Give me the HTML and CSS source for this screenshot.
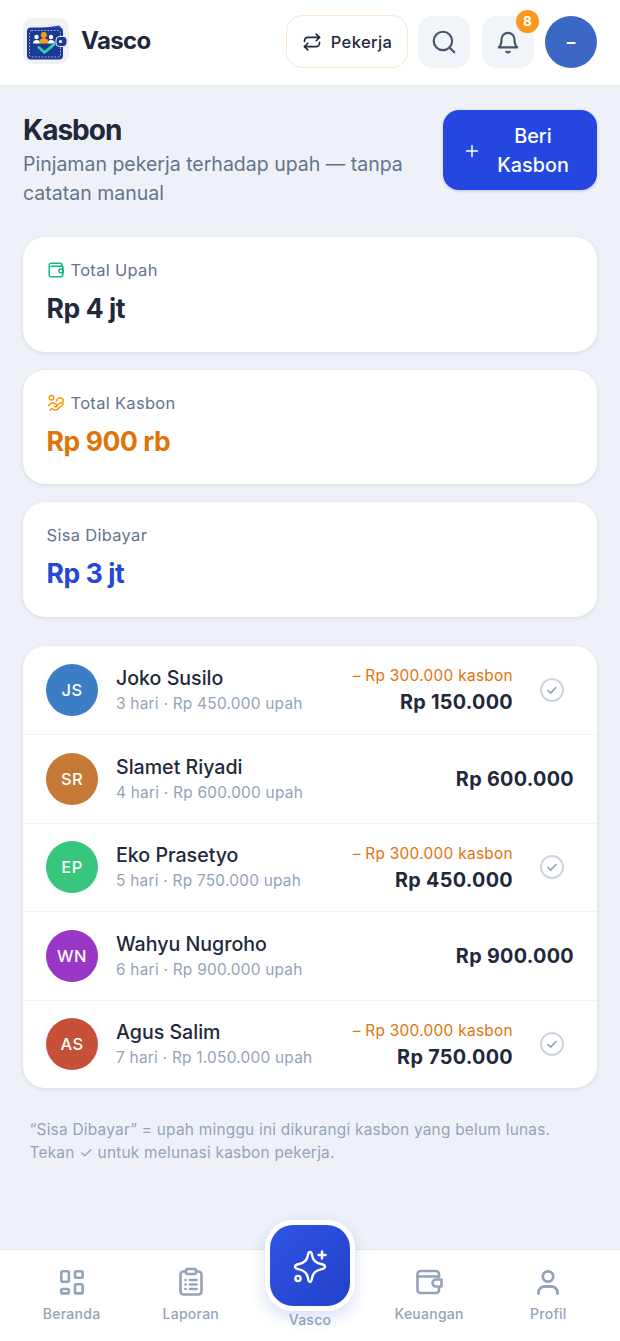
FILE: index.html
```html
<!DOCTYPE html>
<html lang="id">
<head>
<meta charset="utf-8">
<title>Kasbon</title>
<link rel="stylesheet" href="styles.css">
</head>
<body>
<div class="app">
  <header class="topbar">
    <div class="brand">
      <div class="logo">
        <svg viewBox="0 0 46 46" width="46" height="46">
          <path d="M6 12 L36 7.500 Q37.500 7.500 37.500 9 L37.500 13 Z" fill="#2f55e0"/>
          <rect x="4" y="9.500" width="36" height="32" rx="4" fill="#1c3a94"/>
          <rect x="6.500" y="12.500" width="31" height="26.500" rx="2" fill="none" stroke="#c6d3f2" stroke-width=".8" stroke-dasharray="1.600 1.600"/>
          <rect x="33" y="18.500" width="11" height="10" rx="3.500" fill="#1c3a94" stroke="#e8eefb" stroke-width="1"/>
          <circle cx="37.500" cy="23.500" r="1.600" fill="#fff"/>
          <circle cx="13.500" cy="19" r="2.200" fill="#fff"/>
          <circle cx="28" cy="19" r="2.200" fill="#fff"/>
          <path d="M10 25.500 a3.700 3.500 0 0 1 7.400 0Z M24.500 25.500 a3.700 3.500 0 0 1 7.400 0Z" fill="#fff"/>
          <circle cx="20.800" cy="17" r="3" fill="#f59e1f"/>
          <path d="M15.800 25.500 a5 5.500 0 0 1 10 0Z" fill="#f59e1f"/>
          <path d="M16 29.500 L21.500 34.500 L31.500 26" fill="none" stroke="#2dd4aa" stroke-width="2.800" stroke-linecap="round" stroke-linejoin="round"/>
        </svg>
      </div>
      <span class="brand-name">Vasco</span>
    </div>
    <div class="actions">
      <button class="switch">
        <svg class="i20" viewBox="0 0 24 24" fill="none" stroke="#1e293b" stroke-width="2" stroke-linecap="round" stroke-linejoin="round"><path d="M17 2.500l4 4-4 4"/><path d="M3 11.500v-1a4 4 0 0 1 4-4h14"/><path d="M7 21.500l-4-4 4-4"/><path d="M21 12.500v1a4 4 0 0 1-4 4H3"/></svg>
        <span>Pekerja</span>
      </button>
      <div class="icon-btn">
        <svg class="i26" viewBox="0 0 24 24" fill="none" stroke="#475569" stroke-width="2" stroke-linecap="round"><circle cx="11" cy="11" r="8.500"/><path d="M21.500 21.500l-4.500-4.500"/></svg>
      </div>
      <div class="icon-btn bell">
        <svg class="i26" viewBox="0 0 24 24" fill="none" stroke="#475569" stroke-width="2" stroke-linecap="round" stroke-linejoin="round"><path d="M6 9.500a6 6 0 0 1 12 0c0 5.500 2.500 7.500 2.500 7.500h-17S6 15 6 9.500"/><path d="M10.500 21c1 .8 2 .8 3 0"/></svg>
        <span class="badge">8</span>
      </div>
      <div class="avatar-top">–</div>
    </div>
  </header>

  <main class="content">
    <section class="page-head">
      <div class="page-title">
        <h1>Kasbon</h1>
        <p>Pinjaman pekerja terhadap upah — tanpa catatan manual</p>
      </div>
      <button class="primary">
        <svg class="plus" viewBox="0 0 14 14" fill="none" stroke="#fff" stroke-width="1.500" stroke-linecap="round"><path d="M7 1.500v11M1.500 7h11"/></svg>
        <span class="primary-label">Beri Kasbon</span>
      </button>
    </section>

    <section class="stats">
      <div class="stat">
        <div class="stat-label">
          <svg class="i18" viewBox="0 0 24 24" fill="none" stroke="#10b981" stroke-width="2" stroke-linecap="round" stroke-linejoin="round"><path d="M20 7V5.500A2.500 2.500 0 0 0 17.500 3h-12A2.500 2.500 0 0 0 3 5.500v13A2.500 2.500 0 0 0 5.500 21h13a2.500 2.500 0 0 0 2.500-2.500V7H5.500"/><path d="M21.500 11H18a2 2 0 0 0 0 4.500h3.500z"/></svg>
          <span>Total Upah</span>
        </div>
        <div class="stat-value">Rp 4 jt</div>
      </div>
      <div class="stat">
        <div class="stat-label">
          <svg class="i18" viewBox="0 0 24 24" fill="none" stroke="#f59e0b" stroke-width="2" stroke-linecap="round" stroke-linejoin="round"><circle cx="6" cy="5" r="3"/><path d="M2 15.500l3.500-3c1.500-1 3-1 4.500 0l3 1.500a1.700 1.700 0 0 1-1.500 3l-2-.5"/><path d="M13 15l6-3.500c2-1 3.500 1.500 1.800 2.800L14 20.500c-1.500 1-3 1-4.500.5L6 19.500 4 21.500"/><path d="M12.500 9.500c.5-4 5-5.500 8-3.500 1.500 1 1.500 3 .5 5"/></svg>
          <span>Total Kasbon</span>
        </div>
        <div class="stat-value orange">Rp 900 rb</div>
      </div>
      <div class="stat">
        <div class="stat-label"><span>Sisa Dibayar</span></div>
        <div class="stat-value blue">Rp 3 jt</div>
      </div>
    </section>

    <section class="list">
      <div class="row">
        <div class="av av-blue">JS</div>
        <div class="who"><div class="name">Joko Susilo</div><div class="meta">3 hari · Rp 450.000 upah</div></div>
        <div class="amt"><div class="deduct">– Rp 300.000 kasbon</div><div class="net">Rp 150.000</div></div>
        <svg class="check" viewBox="0 0 26 26" fill="none"><circle cx="13" cy="13" r="11" stroke="#cbd5e1" stroke-width="2"/><path d="M9 13.500l2.700 2.700L17 10.500" stroke="#94a3b8" stroke-width="1.700" stroke-linecap="round" stroke-linejoin="round"/></svg>
      </div>
      <div class="row">
        <div class="av av-brown">SR</div>
        <div class="who"><div class="name">Slamet Riyadi</div><div class="meta">4 hari · Rp 600.000 upah</div></div>
        <div class="amt"><div class="net">Rp 600.000</div></div>
      </div>
      <div class="row">
        <div class="av av-green">EP</div>
        <div class="who"><div class="name">Eko Prasetyo</div><div class="meta">5 hari · Rp 750.000 upah</div></div>
        <div class="amt"><div class="deduct">– Rp 300.000 kasbon</div><div class="net">Rp 450.000</div></div>
        <svg class="check" viewBox="0 0 26 26" fill="none"><circle cx="13" cy="13" r="11" stroke="#cbd5e1" stroke-width="2"/><path d="M9 13.500l2.700 2.700L17 10.500" stroke="#94a3b8" stroke-width="1.700" stroke-linecap="round" stroke-linejoin="round"/></svg>
      </div>
      <div class="row">
        <div class="av av-purple">WN</div>
        <div class="who"><div class="name">Wahyu Nugroho</div><div class="meta">6 hari · Rp 900.000 upah</div></div>
        <div class="amt"><div class="net">Rp 900.000</div></div>
      </div>
      <div class="row">
        <div class="av av-red">AS</div>
        <div class="who"><div class="name">Agus Salim</div><div class="meta">7 hari · Rp 1.050.000 upah</div></div>
        <div class="amt"><div class="deduct">– Rp 300.000 kasbon</div><div class="net">Rp 750.000</div></div>
        <svg class="check" viewBox="0 0 26 26" fill="none"><circle cx="13" cy="13" r="11" stroke="#cbd5e1" stroke-width="2"/><path d="M9 13.500l2.700 2.700L17 10.500" stroke="#94a3b8" stroke-width="1.700" stroke-linecap="round" stroke-linejoin="round"/></svg>
      </div>
    </section>

    <p class="note">“Sisa Dibayar” = upah minggu ini dikurangi kasbon yang belum lunas. Tekan ✓ untuk melunasi kasbon pekerja.</p>
  </main>

  <nav class="tabbar">
    <div class="tab">
      <svg class="i30" viewBox="0 0 30 30" fill="none" stroke="#94a3b8" stroke-width="2.600" stroke-linejoin="round"><rect x="4.300" y="4.300" width="7.600" height="10.500" rx="1.500"/><rect x="4.300" y="22" width="7.600" height="4.400" rx="1.500"/><rect x="18" y="4.300" width="7.600" height="6.500" rx="1.500"/><rect x="18" y="17.300" width="7.600" height="9.100" rx="1.500"/></svg>
      <span>Beranda</span>
    </div>
    <div class="tab">
      <svg class="i30" viewBox="0 0 30 30" fill="none" stroke="#94a3b8" stroke-width="2.600" stroke-linecap="round" stroke-linejoin="round"><path d="M10 4.500H7.500A3 3 0 0 0 4.500 7.500v17a3 3 0 0 0 3 3h15a3 3 0 0 0 3-3v-17a3 3 0 0 0-3-3H20"/><rect x="10" y="2" width="10" height="5" rx="1.500"/><path d="M9.500 13h.1M14 13h6.500M9.500 17.500h.1M14 17.500h6.500M9.500 22h.1M14 22h6.500"/></svg>
      <span>Laporan</span>
    </div>
    <div class="tab tab-center">
      <div class="fab">
        <svg viewBox="0 0 40 40" width="40" height="40" fill="none" stroke="#fff" stroke-width="2.400" stroke-linecap="round" stroke-linejoin="round"><path d="M20 6C21.500 6 21.800 7.500 22 9C22.700 13.500 25.500 17 31 18C33 18.400 35 19 35 20.800C35 22.500 33 23 31 23.400C25.500 24.500 22.700 28 22 32C21.800 34 21.500 36 20 36C18.500 36 18.200 34 18 32C17.300 28 14.500 24.500 9 23.400C7 23 5 22.500 5 20.800C5 19 7 18.400 9 18C14.500 17 17.300 13.500 18 9C18.200 7.500 18.500 6 20 6Z"/><path d="M32 5.500v7M28.500 9h7"/><circle cx="8" cy="32.500" r="2.600"/></svg>
      </div>
      <span>Vasco</span>
    </div>
    <div class="tab">
      <svg class="i30" viewBox="0 0 30 30" fill="none" stroke="#94a3b8" stroke-width="2.600" stroke-linecap="round" stroke-linejoin="round"><path d="M25 10V7a3 3 0 0 0-3-3H6.500a3 3 0 0 0-3 3v16a3 3 0 0 0 3 3H22a3 3 0 0 0 3-3v-3"/><path d="M3.500 9.500H25"/><path d="M27.500 12.500H22a3.500 3.500 0 0 0 0 7h5.500z"/></svg>
      <span>Keuangan</span>
    </div>
    <div class="tab">
      <svg class="i30" viewBox="0 0 30 30" fill="none" stroke="#94a3b8" stroke-width="2.800" stroke-linecap="round"><circle cx="15" cy="9.500" r="5.200"/><path d="M5.500 26.500v-1a6 6 0 0 1 6-6h7a6 6 0 0 1 6 6v1"/></svg>
      <span>Profil</span>
    </div>
  </nav>
</div>
</body>
</html>
```
FILE: styles.css
```css
* { box-sizing: border-box; }
html, body { margin: 0; padding: 0; }
body {
  font-family: Inter, "Liberation Sans", sans-serif;
  background: #eef1f8;
  color: #1e293b;
  overflow: hidden;
}
button { font-family: inherit; cursor: pointer; }
p, h1 { margin: 0; }

.app {
  width: 620px;
  height: 1341px;
  display: flex;
  flex-direction: column;
}

.topbar {
  height: 86px;
  flex: none;
  padding: 0 23px;
  background: #fff;
  border-bottom: 1px solid #e2e8f0;
  display: flex;
  align-items: center;
  justify-content: space-between;
}
.brand { display: flex; align-items: center; gap: 12px; margin-top: -4px; }
.logo {
  width: 46px;
  height: 46px;
  background: #f0f1f3;
  border-radius: 10px;
}
.logo svg { display: block; }
.brand-name {
  font-size: 24px;
  font-weight: 700;
  letter-spacing: -0.6px;
  color: #1e293b;
}
.actions { display: flex; align-items: center; gap: 11px; margin-top: -2px; }
.switch {
  width: 122px;
  height: 53px;
  display: flex;
  align-items: center;
  justify-content: center;
  gap: 9px;
  background: #fff;
  border: 1.500px solid #fde7c8;
  border-radius: 16px;
  font-size: 16.500px;
  font-weight: 500;
  letter-spacing: .4px;
  color: #1e293b;
  padding: 0;
  margin-right: -1px;
}
.i20 { width: 20px; height: 20px; }
.i26 { width: 26px; height: 26px; display: block; }
.i18 { width: 18px; height: 18px; display: block; flex: none; }
.i30 { width: 30px; height: 30px; display: block; }
.icon-btn {
  position: relative;
  width: 52px;
  height: 52px;
  background: #f1f5f9;
  border-radius: 14px;
  display: flex;
  align-items: center;
  justify-content: center;
}
.bell { margin-left: 1px; }
.badge {
  position: absolute;
  top: -6px;
  right: -5px;
  width: 23px;
  height: 23px;
  border-radius: 50%;
  background: #f79a1f;
  color: #fff;
  font-size: 13.500px;
  font-weight: 700;
  display: flex;
  align-items: center;
  justify-content: center;
}
.avatar-top {
  width: 52px;
  height: 52px;
  border-radius: 50%;
  background: #3b68c4;
  color: #fff;
  font-size: 17px;
  font-weight: 700;
  display: flex;
  align-items: center;
  justify-content: center;
}

.content { flex: 1; padding: 24px 23px 0; min-height: 0; }

.page-head { display: flex; justify-content: space-between; align-items: flex-start; gap: 16px; }
.page-title { flex: 1; padding-top: 3px; }
.page-title h1 {
  font-size: 28px;
  line-height: 34px;
  font-weight: 700;
  letter-spacing: -1px;
  color: #1e293b;
}
.page-title p {
  margin-top: 3px;
  font-size: 19.500px;
  line-height: 28.500px;
  color: #64748b;
  width: 392px;
}
.primary {
  width: 154px;
  height: 80px;
  flex: none;
  border: 0;
  border-radius: 16px;
  background: #2447e0;
  color: #fff;
  display: flex;
  align-items: center;
  padding: 1px 20px 0 22px;
  box-shadow: 0 1px 3px rgba(36, 71, 224, .25);
}
.plus { width: 14px; height: 14px; flex: none; }
.primary-label {
  flex: 1;
  font-size: 19.800px;
  line-height: 29px;
  font-weight: 500;
  text-align: center;
  padding-left: 10px;
}

.stats { display: flex; flex-direction: column; gap: 18px; margin-top: 30px; }
.stat {
  height: 114.500px;
  background: #fff;
  border-radius: 22px;
  padding: 23px 23.500px 0;
  box-shadow: 0 1px 4px rgba(15, 23, 42, .10);
}
.stat-label {
  display: flex;
  align-items: center;
  gap: 6px;
  font-size: 16.500px;
  line-height: 20px;
  letter-spacing: .3px;
  color: #64748b;
}
.stat-value {
  margin-top: 10px;
  font-size: 26.500px;
  line-height: 36px;
  font-weight: 700;
  letter-spacing: -0.4px;
  color: #1e293b;
}
.orange { color: #df7409; }
.blue { color: #2447d8; }

.list {
  margin-top: 29px;
  background: #fff;
  border-radius: 22px;
  box-shadow: 0 1px 4px rgba(15, 23, 42, .10);
  overflow: hidden;
}
.row {
  height: 88.500px;
  padding: 0 23px;
  display: flex;
  align-items: center;
  gap: 18px;
  border-top: 1px solid #f1f5f9;
}
.row:first-child { border-top: 0; }
.av {
  width: 52px;
  height: 52px;
  flex: none;
  border-radius: 50%;
  color: #fff;
  font-size: 16.500px;
  font-weight: 500;
  letter-spacing: .4px;
  display: flex;
  align-items: center;
  justify-content: center;
  opacity: .92;
}
.av-blue { background: #2b74c0; }
.av-brown { background: #c26e26; }
.av-green { background: #26c274; }
.av-purple { background: #9026c2; }
.av-red { background: #c24226; }
.who { flex: 1; min-width: 0; padding-top: 3px; }
.name { font-size: 19.600px; line-height: 26px; font-weight: 500; margin-top: -1px; color: #1e293b; }
.meta { font-size: 15.400px; line-height: 26px; letter-spacing: .25px; color: #94a3b8; }
.amt { text-align: right; padding-top: 2px; }
.deduct { font-size: 15.400px; line-height: 24px; letter-spacing: .3px; color: #df7409; }
.net { font-size: 19.800px; line-height: 29px; font-weight: 700; letter-spacing: .3px; color: #1e293b; }
.check { width: 26px; height: 26px; flex: none; margin: 0 9px 0 8px; }

.note {
  margin: 30px 6.500px 0;
  font-size: 15.400px;
  line-height: 23px;
  letter-spacing: .24px;
  color: #94a3b8;
}

.tabbar {
  height: 92px;
  flex: none;
  background: #fff;
  border-top: 1px solid #e2e8f0;
  display: grid;
  grid-template-columns: repeat(5, 119.200px);
  padding: 0 12px;
}
.tab {
  position: relative;
  display: flex;
  flex-direction: column;
  align-items: center;
  padding-top: 17px;
  gap: 7px;
  font-size: 14px;
  line-height: 20px;
  font-weight: 500;
  color: #94a3b8;
  letter-spacing: .25px;
}
.tab-center { padding-top: 60px; }
.fab {
  position: absolute;
  top: -30px;
  left: 50%;
  transform: translateX(-50%);
  width: 90px;
  height: 91px;
  border: 5px solid #fff;
  border-radius: 28px;
  background: linear-gradient(135deg, #2f55e6, #2340c8);
  box-shadow: 0 6px 16px rgba(36, 71, 224, .18);
  display: flex;
  align-items: center;
  justify-content: center;
}
```
